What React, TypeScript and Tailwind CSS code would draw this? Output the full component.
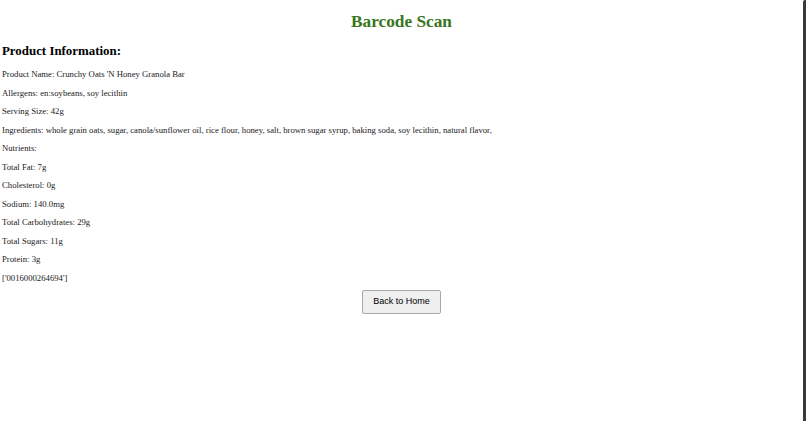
import React from "react";

const lines = [
  "Product Name: Crunchy Oats 'N Honey Granola Bar",
  "Allergens: en:soybeans, soy lecithin",
  "Serving Size: 42g",
  "Ingredients: whole grain oats, sugar, canola/sunflower oil, rice flour, honey, salt, brown sugar syrup, baking soda, soy lecithin, natural flavor,",
  "Nutrients:",
  "Total Fat: 7g",
  "Cholesterol: 0g",
  "Sodium: 140.0mg",
  "Total Carbohydrates: 29g",
  "Total Sugars: 11g",
  "Protein: 3g",
];

export default function App() {
  return (
    <div className="flex h-[421px] w-[806px] overflow-hidden bg-white">
      <div className="flex-1 px-[2px] font-['Liberation_Serif',serif] text-[#1a1a1a]">
        <h1 className="mt-[11.5px] mb-[12.5px] text-center text-[17.3px] font-bold leading-[1.15] text-[#38761d]">
          Barcode Scan
        </h1>
        <h2 className="mb-[10.3px] text-[12.9px] font-bold leading-[1.15] text-black">
          Product Information:
        </h2>
        {lines.map((l, i) => (
          <p key={i} className="my-[8.55px] text-[8.7px] leading-[1.15]">
            {l}
          </p>
        ))}
        <p className="mt-[8.55px] mb-[6.5px] text-[8.7px] leading-[1.15]">['0016000264694']</p>
        <div className="flex justify-center">
          <button className="rounded-[2px] border border-[#a8a8a8] bg-[#efefef] px-[10.5px] py-[5.5px] font-['Liberation_Sans',sans-serif] text-[9px] leading-[11px] text-black">
            Back to Home
          </button>
        </div>
      </div>
      <div className="w-[3px] rounded-tl-[2px] bg-[#3a3a3a]" />
    </div>
  );
}
